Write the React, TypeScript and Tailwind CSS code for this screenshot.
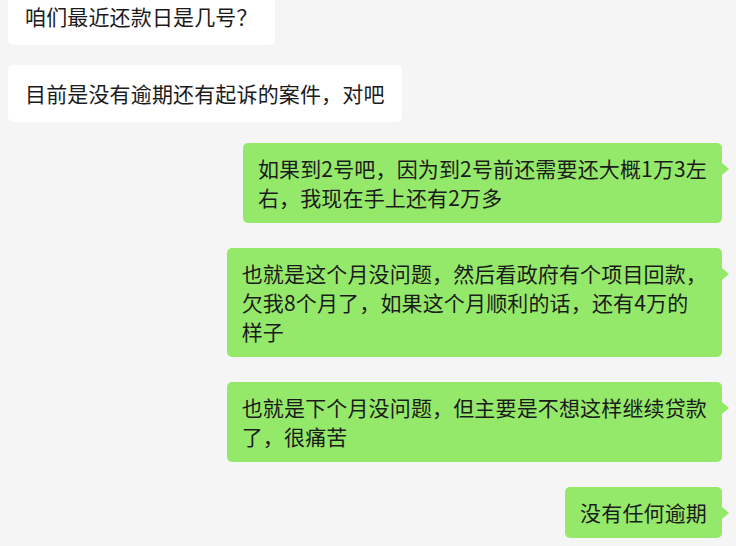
import React from "react";

const font = { fontFamily: '"Noto Sans CJK SC", "Noto Sans", sans-serif' };

function White({ children, className = "" }: { children: React.ReactNode; className?: string }) {
  return (
    <div className={`self-start rounded-[5px] bg-white px-[17px] py-[14px] text-[21px] leading-[29px] tracking-[0.15px] text-[#1b1b1b] whitespace-nowrap ${className}`}>
      {children}
    </div>
  );
}

function Green({ children, className = "" }: { children: React.ReactNode; className?: string }) {
  return (
    <div className={`relative self-end rounded-[5px] bg-[#95e96a] px-[15px] py-[11px] text-[21px] leading-[29px] tracking-[0.15px] text-[#1b1b1b] whitespace-nowrap ${className}`}>
      {children}
      <span className="absolute right-[-7px] top-[20px] h-0 w-0 border-y-[6px] border-l-[7px] border-y-transparent border-l-[#95e96a]" />
    </div>
  );
}

export default function App() {
  return (
    <div style={font} className="flex h-[546px] w-[736px] flex-col overflow-hidden bg-[#f5f5f5] pl-[8px] pr-[14px]">
      <White className="mt-[-12px]">咱们最近还款日是几号？</White>
      <White className="mt-[20px]">目前是没有逾期还有起诉的案件，对吧</White>
      <Green className="mt-[21px]">
        如果到2号吧，因为到2号前还需要还大概1万3左
        <br />
        右，我现在手上还有2万多
      </Green>
      <Green className="mt-[25px]">
        也就是这个月没问题，然后看政府有个项目回款，
        <br />
        欠我8个月了，如果这个月顺利的话，还有4万的
        <br />
        样子
      </Green>
      <Green className="mt-[25px]">
        也就是下个月没问题，但主要是不想这样继续贷款
        <br />
        了，很痛苦
      </Green>
      <Green className="mt-[25px]">没有任何逾期</Green>
    </div>
  );
}
